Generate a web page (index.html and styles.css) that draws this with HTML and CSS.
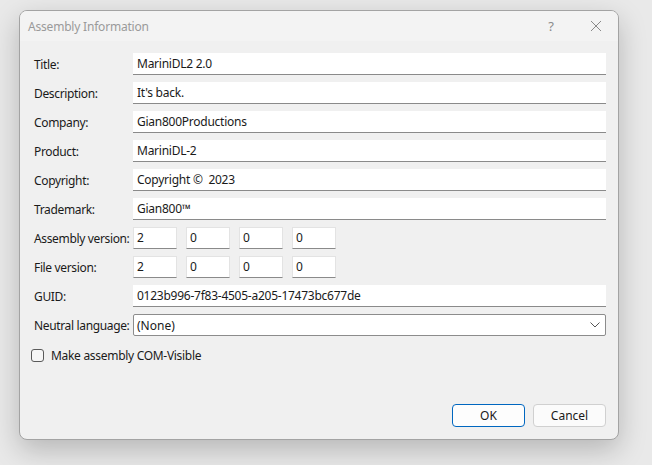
FILE: index.html
```html
<!DOCTYPE html>
<html lang="en">
<head>
  <meta charset="UTF-8" />
  <title>Assembly Information</title>
  <link rel="stylesheet" href="styles.css">
</head>
<body>
  <div class="dialog">
    <div class="titlebar">
      <span class="caption">Assembly Information</span>
      <span class="help">?</span>
      <svg class="close" width="12" height="12" viewBox="0 0 12 12">
        <path d="M1 1 L11 11 M11 1 L1 11" stroke="#8a8a8a" stroke-width="1" fill="none" />
      </svg>
    </div>

    <div class="form">
      <label>Title:</label>
      <div class="field">MariniDL2 2.0</div>

      <label>Description:</label>
      <div class="field">It's back.</div>

      <label>Company:</label>
      <div class="field">Gian800Productions</div>

      <label>Product:</label>
      <div class="field">MariniDL-2</div>

      <label>Copyright:</label>
      <div class="field">Copyright ©&nbsp; 2023</div>

      <label>Trademark:</label>
      <div class="field">Gian800™</div>

      <label>Assembly version:</label>
      <div class="versions">
        <div class="field small">2</div>
        <div class="field small">0</div>
        <div class="field small">0</div>
        <div class="field small">0</div>
      </div>

      <label>File version:</label>
      <div class="versions">
        <div class="field small">2</div>
        <div class="field small">0</div>
        <div class="field small">0</div>
        <div class="field small">0</div>
      </div>

      <label>GUID:</label>
      <div class="field">0123b996-7f83-4505-a205-17473bc677de</div>

      <label>Neutral language:</label>
      <div class="combo">
        <span>(None)</span>
        <svg width="10" height="6" viewBox="0 0 10 6">
          <path d="M0.5 0.5 L5 5 L9.5 0.5" stroke="#555" stroke-width="1" fill="none" />
        </svg>
      </div>
    </div>

    <div class="check">
      <span class="box"></span>
      <span>Make assembly COM-Visible</span>
    </div>

    <div class="buttons">
      <button class="btn primary">OK</button>
      <button class="btn">Cancel</button>
    </div>
  </div>
</body>
</html>
```

FILE: styles.css
```css
html {
  background: #e9e9e9;
}
body {
  margin: 0;
  min-height: 465px;
  box-sizing: border-box;
  padding: 10px 0 0 19px;
  background: #e9e9e9;
  font-family: 'Noto Sans', 'Segoe UI', sans-serif;
  font-size: 12px;
  color: #1a1a1a;
}
.dialog {
  width: 600px;
  height: 430px;
  box-sizing: border-box;
  background: #f0f0f0;
  border: 1px solid #a3a3a3;
  border-radius: 8px;
  box-shadow: 0 10px 28px rgba(0,0,0,0.22);
  display: flex;
  flex-direction: column;
  overflow: hidden;
}
.titlebar {
  height: 30px;
  display: flex;
  align-items: center;
  padding: 0 0 0 8px;
  background: #f3f3f3;
}
.caption {
  color: #9a9a9a;
  flex: 1;
  font-size: 12px;
  letter-spacing: -0.2px;
}
.help {
  color: #8a8a8a;
  font-size: 13px;
  margin-right: 36px;
}
.close {
  margin-right: 16px;
}
.form {
  display: grid;
  grid-template-columns: 99px 1fr;
  row-gap: 7px;
  padding: 12px 12px 0 14px;
  align-items: center;
}
.form label {
  white-space: nowrap;
  letter-spacing: -0.35px;
}
.field {
  height: 22px;
  box-sizing: border-box;
  background: #fff;
  border-bottom: 1px solid #8a8a8a;
  padding: 0 4px;
  line-height: 21px;
  letter-spacing: -0.25px;
}
.versions {
  display: flex;
  gap: 9px;
}
.field.small {
  width: 44px;
  border: 1px solid #e3e3e3;
  border-bottom-color: #8a8a8a;
  padding: 0 3px;
  line-height: 20px;
}
.combo {
  height: 22px;
  box-sizing: border-box;
  background: #fff;
  border: 1px solid #8c8c8c;
  border-radius: 2px;
  display: flex;
  align-items: center;
  justify-content: space-between;
  padding: 0 5px 0 3px;
}
.check {
  display: flex;
  align-items: center;
  gap: 7px;
  margin: 11px 0 0 11px;
  letter-spacing: -0.3px;
}
.box {
  width: 11px;
  height: 11px;
  border: 1px solid #5a5a5a;
  border-radius: 3px;
  background: #f6f6f6;
}
.buttons {
  margin-top: auto;
  display: flex;
  justify-content: flex-end;
  gap: 8px;
  padding: 0 12px 12px 0;
}
.btn {
  width: 73px;
  height: 23px;
  box-sizing: border-box;
  font-family: inherit;
  font-size: 12px;
  color: #1a1a1a;
  background: #fbfbfb;
  border: 1px solid #d0d0d0;
  border-radius: 4px;
  padding: 0;
}
.btn.primary {
  border: 1px solid #0067c0;
  background: #fdfdfd;
}
```
